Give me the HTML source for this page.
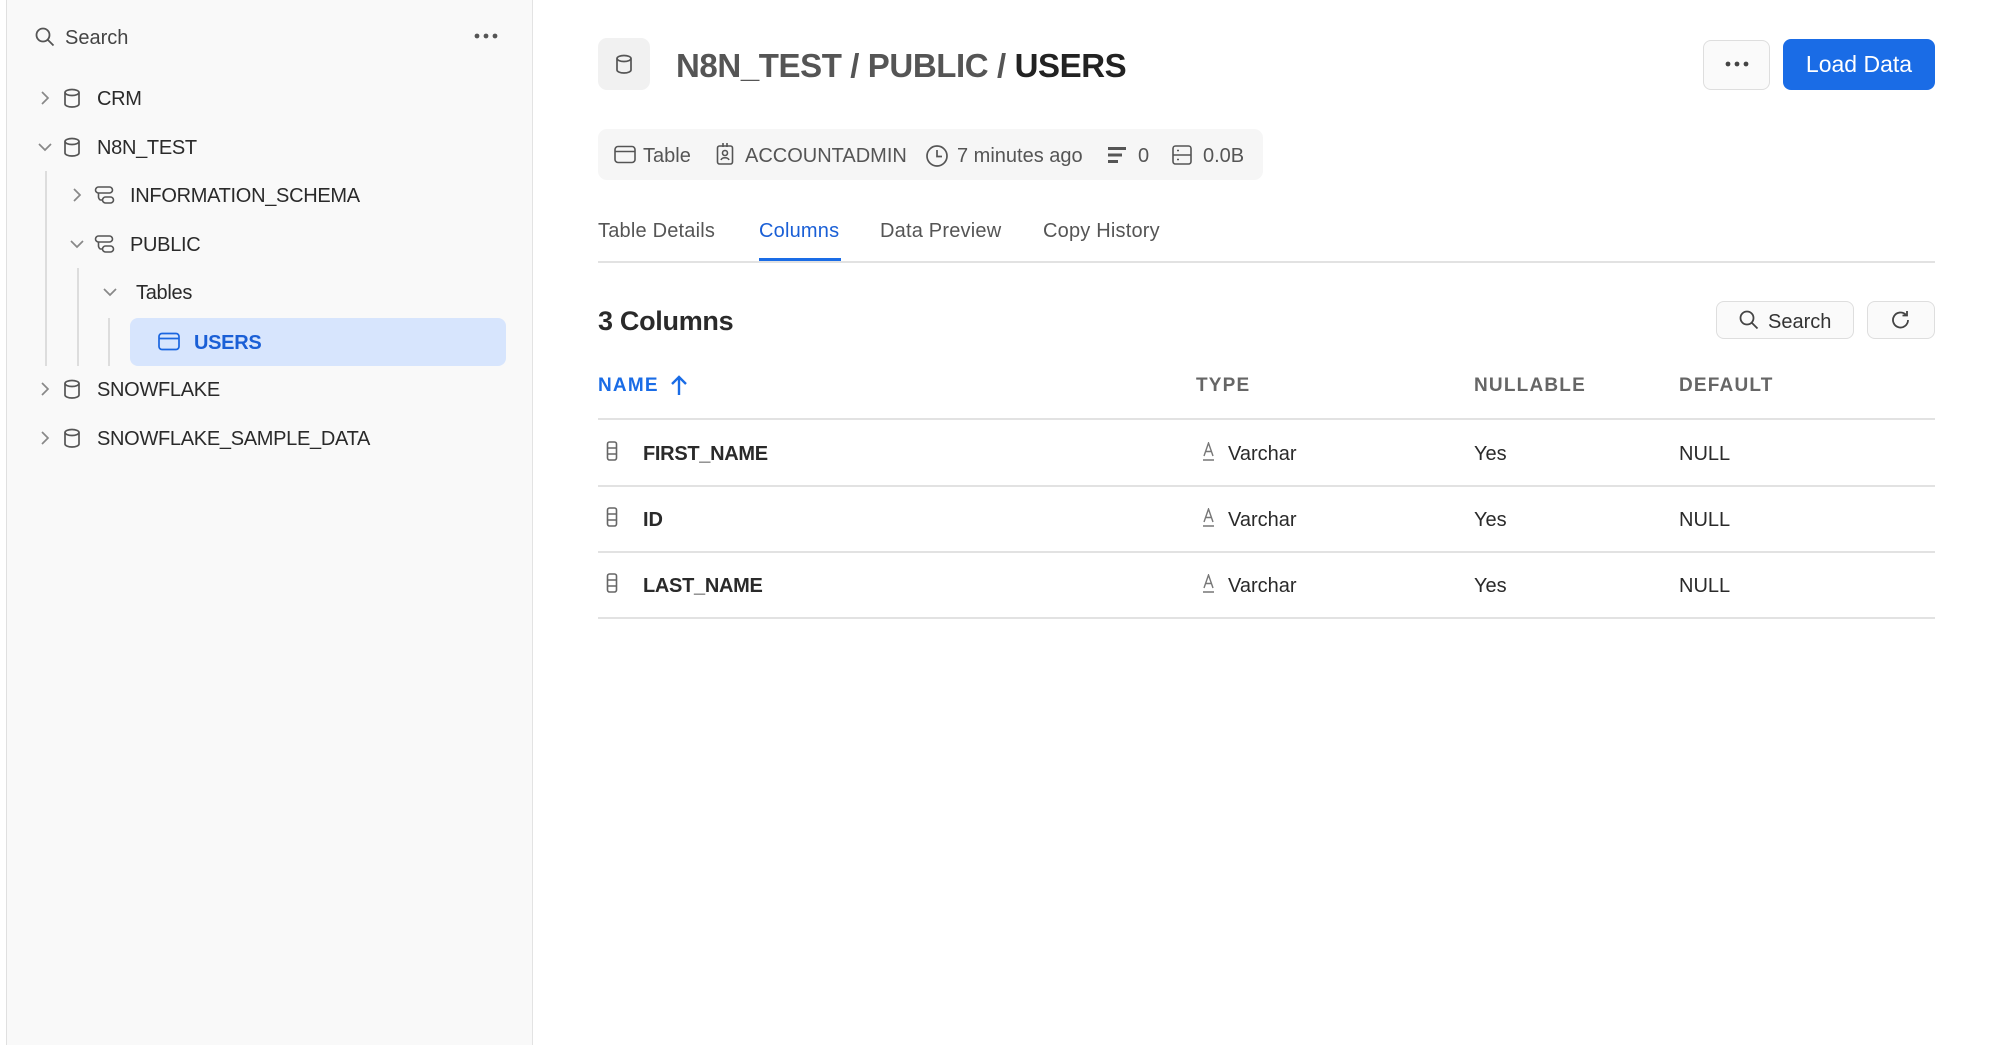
<!DOCTYPE html>
<html><head><meta charset="utf-8"><style>
*{margin:0;padding:0;box-sizing:border-box}
body{width:2000px;height:1045px;background:#fff;font-family:"Liberation Sans",sans-serif;color:#2a2a2a;position:relative;overflow:hidden}
.a{position:absolute}
.side{left:6px;top:0;width:527px;height:1045px;background:#f9f9f9;border-left:1px solid #e0e0e0;border-right:1px solid #e3e3e3}
.t{font-size:20px;line-height:24px;transform:translateY(-11px);white-space:nowrap}
.st{font-size:20px;letter-spacing:-0.3px}
.ic{transform:translate(-11px,-11px)}
.vl{width:1.5px;background:#ddd}
.g{color:#555}
.hd{font-size:19px;font-weight:bold;letter-spacing:1.2px;color:#666;transform:translateY(-10px)}
.hl{height:1.5px;background:#e2e2e2;left:598px;width:1337px}
.btn{border:1.5px solid #dedede;border-radius:8px;background:#fafafa}
.tab{font-weight:bold;letter-spacing:-0.1px}
</style></head><body>
<div class="a side"></div>
<svg class="a" style="left:34px;top:26px" width="22" height="22" viewBox="0 0 22 22" fill="none" stroke="#555" stroke-width="1.8"><circle cx="9" cy="9" r="6.5"/><path d="M14 14l5.5 5.5"/></svg>
<div class="a t" style="left:65px;top:37px;color:#444">Search</div>
<div class="a" style="left:474px;top:33px;font-size:0"><svg width="24" height="6"><circle cx="3" cy="3" r="2.4" fill="#555"/><circle cx="12" cy="3" r="2.4" fill="#555"/><circle cx="21" cy="3" r="2.4" fill="#555"/></svg></div>

<svg width="0" height="0" style="position:absolute"><defs>
<g id="chr"><path d="M8 5l6 6-6 6" fill="none" stroke="#888" stroke-width="1.7"/></g>
<g id="chd"><path d="M5 8l6 6 6-6" fill="none" stroke="#888" stroke-width="1.7"/></g>
<g id="db"><ellipse cx="11" cy="5.5" rx="7" ry="3" fill="none" stroke="#555" stroke-width="1.7"/><path d="M4 5.5v11.5c0 1.6 3.1 3 7 3s7-1.4 7-3V5.5" fill="none" stroke="#555" stroke-width="1.7"/></g>
<g id="sc" fill="none" stroke="#555" stroke-width="1.6"><rect x="1.5" y="3" width="17" height="6" rx="3"/><rect x="8.5" y="13" width="11" height="6" rx="3"/><path d="M4.5 9v4c0 1 1 3 2 3h2"/></g>
</defs></svg>

<svg class="a ic" style="left:45px;top:98px" width="22" height="22"><use href="#chr"/></svg>
<svg class="a ic" style="left:72px;top:98px" width="22" height="22"><use href="#db"/></svg>
<div class="a t st" style="left:97px;top:98px">CRM</div>

<svg class="a ic" style="left:45px;top:147px" width="22" height="22"><use href="#chd"/></svg>
<svg class="a ic" style="left:72px;top:147px" width="22" height="22"><use href="#db"/></svg>
<div class="a t st" style="left:97px;top:147px">N8N_TEST</div>

<div class="a vl" style="left:45px;top:171px;height:195px"></div>
<svg class="a ic" style="left:77px;top:195px" width="22" height="22"><use href="#chr"/></svg>
<svg class="a ic" style="left:105px;top:195px" width="22" height="22"><use href="#sc"/></svg>
<div class="a t st" style="left:130px;top:195px">INFORMATION_SCHEMA</div>

<svg class="a ic" style="left:77px;top:244px" width="22" height="22"><use href="#chd"/></svg>
<svg class="a ic" style="left:105px;top:244px" width="22" height="22"><use href="#sc"/></svg>
<div class="a t st" style="left:130px;top:244px">PUBLIC</div>

<div class="a vl" style="left:77px;top:268px;height:98px"></div>
<svg class="a ic" style="left:110px;top:292px" width="22" height="22"><use href="#chd"/></svg>
<div class="a t st" style="left:136px;top:292px">Tables</div>

<div class="a vl" style="left:108px;top:318px;height:48px"></div>
<div class="a" style="left:130px;top:318px;width:376px;height:48px;background:#d7e5fd;border-radius:8px"></div>
<svg class="a" style="left:158px;top:332px" width="22" height="20" fill="none" stroke="#1a66e0" stroke-width="1.7"><rect x="1" y="1.5" width="20" height="16" rx="3"/><path d="M1 6.5h20"/></svg>
<div class="a t st" style="left:194px;top:342px;color:#1a5fd6;font-weight:bold">USERS</div>

<svg class="a ic" style="left:45px;top:389px" width="22" height="22"><use href="#chr"/></svg>
<svg class="a ic" style="left:72px;top:389px" width="22" height="22"><use href="#db"/></svg>
<div class="a t st" style="left:97px;top:389px">SNOWFLAKE</div>

<svg class="a ic" style="left:45px;top:438px" width="22" height="22"><use href="#chr"/></svg>
<svg class="a ic" style="left:72px;top:438px" width="22" height="22"><use href="#db"/></svg>
<div class="a t st" style="left:97px;top:438px">SNOWFLAKE_SAMPLE_DATA</div>

<div class="a" style="left:598px;top:38px;width:52px;height:52px;background:#f1f1f1;border-radius:9px"></div>
<svg class="a" style="left:613px;top:53px" width="22" height="22"><use href="#db"/></svg>
<div class="a" style="left:676px;top:45px;font-size:33px;letter-spacing:-0.4px;line-height:42px;font-weight:bold;white-space:nowrap"><span class="g">N8N_TEST / PUBLIC / </span><span style="color:#222">USERS</span></div>

<div class="a btn" style="left:1703px;top:40px;width:67px;height:50px"></div>
<svg class="a" style="left:1725px;top:61px" width="24" height="6"><circle cx="3" cy="3" r="2.4" fill="#444"/><circle cx="12" cy="3" r="2.4" fill="#444"/><circle cx="21" cy="3" r="2.4" fill="#444"/></svg>
<div class="a" style="left:1783px;top:39px;width:152px;height:51px;background:#1a6ce6;border-radius:8px;color:#fff;font-size:23px;line-height:51px;text-align:center">Load Data</div>

<div class="a" style="left:598px;top:129px;width:665px;height:51px;background:#f6f6f6;border-radius:9px"></div>
<svg class="a" style="left:614px;top:145px" width="22" height="20" fill="none" stroke="#555" stroke-width="1.6"><rect x="1" y="1.5" width="20" height="16" rx="3"/><path d="M1 6.5h20"/></svg>
<div class="a t" style="left:643px;top:155px;color:#555">Table</div>
<svg class="a" style="left:716px;top:142px" width="18" height="24" fill="none" stroke="#555" stroke-width="1.6"><rect x="1.5" y="4" width="15" height="18" rx="2"/><path d="M7 1v4M11 1v4"/><circle cx="9" cy="11" r="2.5"/><path d="M5 18c1-3 7-3 8 0"/></svg>
<div class="a t" style="left:745px;top:155px;color:#555">ACCOUNTADMIN</div>
<svg class="a" style="left:925px;top:144px" width="24" height="24" fill="none" stroke="#555" stroke-width="1.7"><circle cx="12" cy="12" r="10"/><path d="M12 6v6.5h5"/></svg>
<div class="a t" style="left:957px;top:155px;color:#555">7 minutes ago</div>
<svg class="a" style="left:1108px;top:146px" width="20" height="18" fill="#555"><rect x="0" y="1" width="18" height="3"/><rect x="0" y="7.5" width="14" height="3"/><rect x="0" y="14" width="10" height="3"/></svg>
<div class="a t" style="left:1138px;top:155px;color:#555">0</div>
<svg class="a" style="left:1172px;top:145px" width="20" height="20" fill="none" stroke="#555" stroke-width="1.6"><rect x="1" y="1" width="18" height="18" rx="2.5"/><path d="M1 10h18M5 5.5h2M5 14.5h2"/></svg>
<div class="a t" style="left:1203px;top:155px;color:#555">0.0B</div>

<div class="a t" style="left:598px;top:230px;color:#555;letter-spacing:0.2px">Table Details</div>
<div class="a t" style="left:759px;top:230px;color:#1a5fd6;letter-spacing:0.2px">Columns</div>
<div class="a t" style="left:880px;top:230px;color:#555;letter-spacing:0.2px">Data Preview</div>
<div class="a t" style="left:1043px;top:230px;color:#555;letter-spacing:0.2px">Copy History</div>
<div class="a hl" style="top:261px"></div>
<div class="a" style="left:759px;top:258px;width:82px;height:3px;background:#1a6ce6"></div>

<div class="a" style="left:598px;top:305px;font-size:27px;line-height:32px;font-weight:bold;color:#2a2a2a;letter-spacing:-0.3px">3 Columns</div>
<div class="a btn" style="left:1716px;top:301px;width:138px;height:38px"></div>
<svg class="a" style="left:1738px;top:309px" width="22" height="22" fill="none" stroke="#444" stroke-width="1.8"><circle cx="9" cy="9" r="6.5"/><path d="M14 14l5.5 5.5"/></svg>
<div class="a t" style="left:1768px;top:321px;color:#333">Search</div>
<div class="a btn" style="left:1867px;top:301px;width:68px;height:38px"></div>
<svg class="a" style="left:1890px;top:309px" width="22" height="22" fill="none" stroke="#444" stroke-width="1.8"><path d="M18 11a7.5 7.5 0 1 1-2.2-5.3"/><path d="M17 2v4.5h-4.5"/></svg>

<div class="a hd" style="left:598px;top:385px;color:#1a6ce6">NAME</div>
<svg class="a" style="left:669px;top:374px" width="20" height="22" fill="none" stroke="#1a6ce6" stroke-width="2.4"><path d="M10 21V3M3 10l7-7 7 7"/></svg>
<div class="a hd" style="left:1196px;top:385px">TYPE</div>
<div class="a hd" style="left:1474px;top:385px">NULLABLE</div>
<div class="a hd" style="left:1679px;top:385px">DEFAULT</div>
<div class="a hl" style="top:418px"></div>

<div class="a hl" style="top:485px"></div>
<div class="a hl" style="top:551px"></div>
<div class="a hl" style="top:617px"></div>

<svg width="0" height="0" style="position:absolute"><defs>
<g id="ci" fill="none" stroke="#666" stroke-width="1.6"><rect x="1.5" y="1" width="9" height="18" rx="2"/><path d="M1.5 7h9M1.5 13h9"/></g>
<g id="ta" fill="none" stroke="#777" stroke-width="1.4"><path d="M2 14L6.5 1 11 14M3.7 9.5h5.6M1 18h11"/></g>
</defs></svg>

<svg class="a" style="left:606px;top:441px" width="12" height="20"><use href="#ci"/></svg>
<div class="a t" style="left:643px;top:453px;font-weight:bold;letter-spacing:-0.3px">FIRST_NAME</div>
<svg class="a" style="left:1202px;top:442px" width="13" height="20"><use href="#ta"/></svg>
<div class="a t" style="left:1228px;top:453px">Varchar</div>
<div class="a t" style="left:1474px;top:453px">Yes</div>
<div class="a t" style="left:1679px;top:453px">NULL</div>

<svg class="a" style="left:606px;top:507px" width="12" height="20"><use href="#ci"/></svg>
<div class="a t" style="left:643px;top:519px;font-weight:bold">ID</div>
<svg class="a" style="left:1202px;top:508px" width="13" height="20"><use href="#ta"/></svg>
<div class="a t" style="left:1228px;top:519px">Varchar</div>
<div class="a t" style="left:1474px;top:519px">Yes</div>
<div class="a t" style="left:1679px;top:519px">NULL</div>

<svg class="a" style="left:606px;top:573px" width="12" height="20"><use href="#ci"/></svg>
<div class="a t" style="left:643px;top:585px;font-weight:bold;letter-spacing:-0.3px">LAST_NAME</div>
<svg class="a" style="left:1202px;top:574px" width="13" height="20"><use href="#ta"/></svg>
<div class="a t" style="left:1228px;top:585px">Varchar</div>
<div class="a t" style="left:1474px;top:585px">Yes</div>
<div class="a t" style="left:1679px;top:585px">NULL</div>
</body></html>
